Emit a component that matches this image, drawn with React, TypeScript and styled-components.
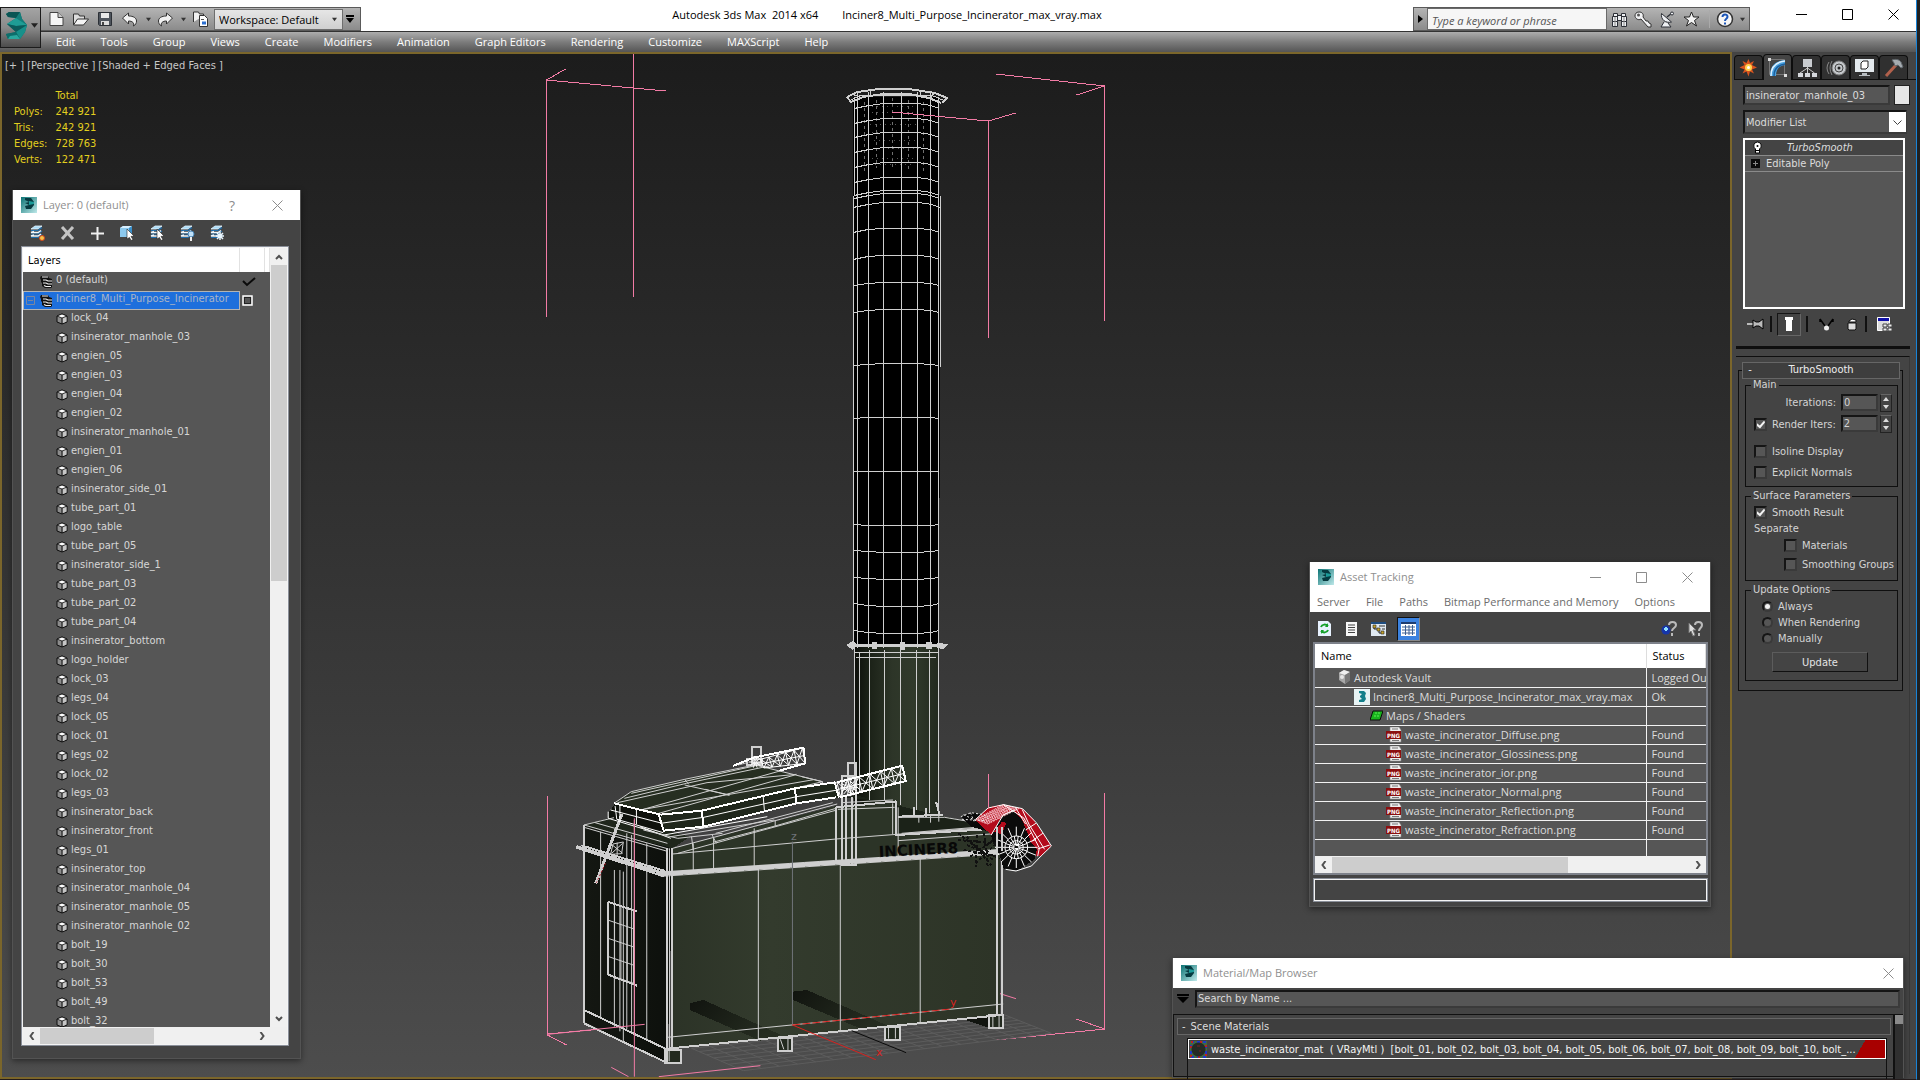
import React from "react";
import styled, { createGlobalStyle, css } from "styled-components";

const tahoma = `"DejaVu Sans Condensed", "DejaVu Sans", sans-serif`;
const segoe = `"Open Sans", "Noto Sans", sans-serif`;

const GlobalStyle = createGlobalStyle`
  * { box-sizing: border-box; }
  body { margin: 0; background: #202020; font-family: ${tahoma}; font-size: 11px; color: #dcdcdc; overflow: hidden; }
  button, input, select { font: inherit; color: inherit; margin: 0; padding: 0; border: 0; background: none; border-radius: 0; }
  svg { display: block; flex: none; }
`;

/* ---------- application frame ---------- */

const Frame = styled.div`
  position: relative;
  display: flex;
  flex-direction: column;
  height: 100vh;
  margin-right: 3px;
  border-right: 1px solid #1883d7;
  border-bottom: 1px solid #241c1c;
  overflow: hidden;
`;

const Header = styled.header`
  display: grid;
  grid-template: 31px 21px / 41px 1fr;
  background: linear-gradient(#fff 31px, #333 31px, #333 32px, #adadad 32px, #7c7c7c 42px, #555 52px);
`;

const AppButton = styled.button`
  grid-row: 1 / 3;
  display: flex;
  align-items: center;
  gap: 4px;
  height: 41px;
  margin-top: 7px;
  padding: 0 0 4px 5px;
  border: 1px solid #1c1c1c;
  background: linear-gradient(#a4a4a4, #8a8a8a 50%, #4c4c4c);
`;

const TitleBar = styled.div`
  display: flex;
  align-items: flex-end;
`;

const QuickBar = styled.div`
  display: flex;
  align-items: center;
  height: 24px;
  padding: 0 3px 0 7px;
  border: 1px solid #5a5a5a;
  border-left: 0;
  background: linear-gradient(#b4b4b4, #8b8b8b);
`;

const BarButton = styled.button<{ $w?: number }>`
  display: flex;
  align-items: center;
  justify-content: center;
  width: ${(p) => p.$w ?? 24}px;
  height: 22px;
`;

const WorkspaceSelect = styled.div`
  position: relative;
  display: flex;
  select {
    width: 129px;
    height: 21px;
    padding-left: 4px;
    appearance: none;
    border: 1px solid #6e6e6e;
    background: linear-gradient(#e6e6e6, #cfcfcf);
    color: #000;
    font: 11px ${segoe};
  }
  svg { position: absolute; right: 6px; top: 8px; pointer-events: none; }
`;

const AppTitle = styled.h1`
  flex: 1;
  display: flex;
  justify-content: center;
  gap: 24px;
  margin: 0;
  align-self: stretch;
  font: 11px/30px ${segoe};
  color: #000;
`;

const InfoCenter = styled.div`
  display: flex;
  align-items: center;
  height: 24px;
  width: 337px;
  border: 1px solid #5a5a5a;
  background: linear-gradient(#b4b4b4, #8b8b8b);
  input {
    width: 180px;
    height: 22px;
    padding: 2px 0 0 4px;
    border: 1px solid #6a6a6a;
    background: #f6f6f6;
    font: italic 11px ${segoe};
    color: #444;
    &::placeholder { color: #555; }
  }
`;

const InfoDivider = styled.span`
  width: 1px;
  height: 18px;
  margin: 0 2px 0 6px;
  background: #aaa;
`;

const WindowButtons = styled.div`
  display: flex;
  align-self: stretch;
  padding-left: 28px;
`;

const CaptionButton = styled.button<{ $dim?: boolean; $w?: number }>`
  display: flex;
  align-items: center;
  justify-content: center;
  width: ${(p) => p.$w ?? 46}px;
  height: 29px;
  color: ${(p) => (p.$dim ? "#8c8c8c" : "#000")};
  font: 14px ${segoe};
`;

const MenuBar = styled.nav`
  display: flex;
  gap: 25px;
  padding-left: 15px;
  button { font: 11px/20px ${segoe}; color: #fff; white-space: nowrap; }
`;

const Workspace = styled.main`
  flex: 1;
  display: flex;
  min-height: 0;
`;

/* ---------- viewport ---------- */

const Viewport = styled.section`
  position: relative;
  flex: 1;
  min-width: 0;
  overflow: hidden;
  border: 2px solid #7b662b;
  background: linear-gradient(#1c1c1c, #2a2a2a 30%, #3b3b3b 65%, #4d4d4d);
`;

const Scene = styled.svg`
  position: absolute;
  left: -2px;
  top: -2px;
  width: 1732px;
  height: 1027px;
`;

const ViewportLabels = styled.div`
  position: relative;
  display: flex;
  gap: 3px;
  padding: 4px 3px 0;
  button { line-height: 16px; color: #c8c8c8; white-space: nowrap; }
`;

const Stats = styled.table`
  position: relative;
  margin: 14px 0 0 12px;
  border-collapse: collapse;
  color: #e3cf1e;
  line-height: 16px;
  th, td { padding: 0 8px 0 0; font-weight: normal; text-align: left; white-space: nowrap; }
`;

/* ---------- command panel ---------- */

const Panel = styled.aside`
  width: 184px;
  padding: 2px 0 0 2px;
  background: #444;
`;

const Tabs = styled.div`
  display: flex;
  height: 26px;
  border-bottom: 1px solid #0d0d0d;
`;

const Tab = styled.button<{ $on?: boolean }>`
  display: flex;
  align-items: center;
  justify-content: center;
  width: 29px;
  height: ${(p) => (p.$on ? 26 : 24)}px;
  margin-top: ${(p) => (p.$on ? 0 : 1)}px;
  border: 1px solid #0d0d0d;
  border-bottom: 0;
  border-radius: 4px 4px 0 0;
  background: ${(p) => (p.$on ? "#444" : "#303030")};
`;

const sunken = css`
  border: 2px solid;
  border-color: #151515 #3a3a3a #3a3a3a #151515;
  background: #565656;
`;

const PanelBody = styled.div`
  padding: 5px 6px 0 9px;
`;

const NameRow = styled.div`
  display: flex;
  justify-content: space-between;
  input[type="text"] { ${sunken} width: 147px; height: 20px; padding-left: 1px; }
`;

const Swatch = styled.button`
  width: 16px;
  height: 20px;
  border: 1px solid #222;
  background: #e6e6e6;
`;

const ModifierSelect = styled.div`
  position: relative;
  margin: 5px 3px 0 0;
  select { ${sunken} width: 100%; height: 24px; appearance: none; padding-left: 1px; }
  svg { position: absolute; right: 1px; top: 2px; pointer-events: none; }
`;

const Stack = styled.ul`
  height: 171px;
  margin: 4px 5px 0 0;
  padding: 0;
  list-style: none;
  border: 2px solid #fff;
  background: #565656;
`;

const StackItem = styled.li<{ $active?: boolean }>`
  display: flex;
  align-items: center;
  gap: ${(p) => (p.$active ? 24 : 6)}px;
  height: 16px;
  padding-left: ${(p) => (p.$active ? 7 : 6)}px;
  border-bottom: 1px solid #8a8a8a;
  background: ${(p) => (p.$active ? "#444" : "#565656")};
  font-style: ${(p) => (p.$active ? "italic" : "normal")};
`;

const StackTools = styled.div`
  display: flex;
  align-items: center;
  gap: 5px;
  height: 24px;
  margin: 3px 0 1px 2px;
`;

const ToolDivider = styled.span`
  width: 2px;
  height: 16px;
  background: #111;
`;

const PressedTool = styled.button`
  display: flex;
  align-items: center;
  justify-content: center;
  width: 24px;
  height: 23px;
  border: 1px solid;
  border-color: #151515 #666 #666 #151515;
`;

const PlainTool = styled.button<{ $w?: number }>`
  display: flex;
  justify-content: center;
  width: ${(p) => (p.$w ? p.$w + "px" : "auto")};
`;

const RollupArea = styled.div`
  margin: 10px 6px 0 2px;
  border-top: 3px solid #0f0f0f;
`;

const Rollup = styled.div`
  margin-top: 7px;
  padding: 5px 6px 0 2px;
  border-top: 1px solid #0f0f0f;
  border-right: 1px solid #383838;
  height: 718px;
`;

const RollupHead = styled.button`
  position: relative;
  display: grid;
  grid-template-columns: 14px 1fr 14px;
  width: 158px;
  height: 17px;
  margin-left: 4px;
  border: 1px solid #666;
  background: #3e3e3e;
  line-height: 14px;
  color: #eee;
`;

const RollupBody = styled.div`
  margin-top: -9px;
  width: 165px;
  padding: 8px 4px 6px 6px;
  border: 1px solid #0f0f0f;
`;

const Group = styled.fieldset<{ $h: number }>`
  display: flex;
  flex-direction: column;
  height: ${(p) => p.$h}px;
  margin: 0 0 3px;
  padding: 0 5px 0 8px;
  border: 1px solid #0f0f0f;
  min-width: 0;
  legend { margin-left: -3px; padding: 0 2px; line-height: 12px; color: #d4d4d4; }
`;

const Field = styled.div<{ $h?: number; $indent?: number; $end?: boolean }>`
  display: flex;
  align-items: center;
  justify-content: ${(p) => (p.$end ? "flex-end" : "flex-start")};
  gap: 5px;
  height: ${(p) => p.$h ?? 17}px;
  padding-left: ${(p) => p.$indent ?? 0}px;
  white-space: nowrap;
  color: #d4d4d4;
`;

const CheckBox = styled.input.attrs({ type: "checkbox" })`
  ${sunken}
  appearance: none;
  position: relative;
  flex: none;
  width: 13px;
  height: 13px;
  &:checked::before {
    content: "";
    position: absolute;
    inset: 1px 0 0 1px;
    background: #f2f2f2;
    clip-path: polygon(0 35%, 35% 62%, 90% 0, 100% 25%, 38% 100%, 0 70%);
  }
`;

const Radio = styled.input.attrs({ type: "radio" })`
  ${sunken}
  appearance: none;
  position: relative;
  flex: none;
  width: 11px;
  height: 11px;
  border-radius: 50%;
  &:checked::before {
    content: "";
    position: absolute;
    inset: 1px;
    border-radius: 50%;
    background: #f2f2f2;
  }
`;

const Spinner = styled.span`
  display: flex;
  gap: 2px;
  input { ${sunken} width: 37px; height: 17px; padding-left: 1px; }
`;

const SpinButtons = styled.span`
  display: grid;
  grid-template-rows: 8px 8px;
  width: 12px;
  border: 1px solid #222;
  border-top-color: #666;
  button { display: flex; align-items: center; justify-content: center; }
`;

const UpdateButton = styled.button`
  width: 96px;
  height: 20px;
  margin: 3px 0 0 18px;
  border: 1px solid;
  border-color: #5c5c5c #111 #111 #5c5c5c;
  color: #e4e4e4;
`;

/* ---------- floating windows ---------- */

const FloatWindow = styled.section`
  position: absolute;
  border: 1px solid #535353;
  border-top: 0;
  background: #444;
  box-shadow: 0 2px 6px rgba(0, 0, 0, 0.45);
`;

const LayerWindow = styled(FloatWindow)`left: 12px; top: 190px; width: 289px;`;
const AssetWindow = styled(FloatWindow)`right: 205px; top: 562px; width: 402px;`;
const MaterialWindow = styled(FloatWindow)`right: 12px; top: 958px; width: 732px;`;

const Caption = styled.header`
  display: flex;
  align-items: center;
  height: 30px;
  padding-left: 8px;
  background: #fff;
  h2 { flex: 1; margin: 0 0 0 6px; font: 11px/30px ${segoe}; color: #8f8f8f; }
`;

const ToolRow = styled.div<{ $h: number }>`
  display: flex;
  align-items: center;
  height: ${(p) => p.$h}px;
`;

const LayerTools = styled(ToolRow)`
  gap: 10px;
  padding-left: 14px;
  button { display: flex; justify-content: center; width: 20px; }
`;

const TreeFrame = styled.div`
  display: grid;
  grid-template: 779px 17px / 1fr 17px;
  margin: 0 11px 12px 8px;
  border: 2px solid #f4f4f4;
  outline: 1px solid #8a8f99;
  outline-offset: -1px;
  background: #efefef;
`;

const TreeTable = styled.table`
  width: 100%;
  border-collapse: collapse;
  table-layout: fixed;
  thead th { height: 24px; padding: 0 0 0 5px; background: #fff; color: #000; font-weight: normal; text-align: left; border-right: 1px solid #e2e2e2; }
  tbody td { height: 19px; padding: 0; }
`;

const Clip = styled.div`
  overflow: hidden;
  background: #565656;
`;

const TreeCell = styled.div<{ $level: number; $selected?: boolean }>`
  display: flex;
  align-items: center;
  gap: 3px;
  height: 19px;
  padding: 0 0 1px ${(p) => (p.$selected ? 2 : p.$level * 16 + 1)}px;
  border: ${(p) => (p.$selected ? "1px solid #b4b4b4" : "0")};
  background: ${(p) => (p.$selected ? "#1e6fdc" : "transparent")};
  color: ${(p) => (p.$selected ? "#a9b4c6" : "#d6d6d6")};
  white-space: nowrap;
  span { line-height: 14px; padding-bottom: 3px; }
`;

const ScrollV = styled.div`
  display: flex;
  flex-direction: column;
  align-items: center;
  background: #f0f0f0;
`;
const ScrollH = styled.div`
  display: flex;
  align-items: center;
  height: 17px;
  background: #f0f0f0;
`;
const Arrow = styled.button`
  display: flex;
  align-items: center;
  justify-content: center;
  width: 17px;
  height: 17px;
`;
const ThumbV = styled.div`width: 16px; height: 316px; background: #cdcdcd; margin-bottom: auto;`;
const ThumbH = styled.div<{ $w: number }>`width: ${(p) => p.$w}px; height: 16px; background: #cdcdcd; margin-right: auto;`;

const AssetMenu = styled.nav`
  display: flex;
  gap: 16px;
  height: 20px;
  padding-left: 7px;
  background: #fff;
  button { font: 11px/20px ${segoe}; color: #6c6c6c; white-space: nowrap; }
`;

const AssetTools = styled(ToolRow)`
  gap: 11px;
  padding: 3px 6px 0 6px;
  button { display: flex; align-items: center; justify-content: center; width: 16px; }
`;

const Push = styled.span`flex: 1;`;

const ActiveTool = styled.span`
  border: 1px solid #111;
  border-right-color: #888;
  border-bottom-color: #888;
  button { width: 21px; height: 22px; background: #3b82e0; }
`;

const AssetFrame = styled.div`
  margin: 0 2px 0 3px;
  border: 2px solid #7d818a;
  background: #565656;
  overflow: hidden;
`;

const AssetTable = styled.table`
  width: 100%;
  border-collapse: collapse;
  table-layout: fixed;
  font: 11px ${segoe};
  white-space: nowrap;
  col:first-child { width: 331px; }
  th { height: 24px; padding: 0 0 2px 6px; background: #fff; color: #000; font-weight: normal; text-align: left; border-right: 1px solid #ddd; }
  td { height: 19px; padding: 0; border-bottom: 1px solid #f2f2f2; overflow: hidden; }
  td + td { padding-left: 5px; border-left: 1px solid #f2f2f2; }
  tbody tr:last-child td { height: 17px; border-bottom: 0; }
`;

const AssetCell = styled.div<{ $level: number }>`
  display: flex;
  align-items: center;
  gap: 3px;
  height: 18px;
  padding-left: ${(p) => 23 + p.$level * 16}px;
`;

const StatusBox = styled.div`
  height: 24px;
  margin: 3px 2px 4px 3px;
  border: 2px solid #f4f4f4;
  outline: 1px solid #8a8f99;
  outline-offset: -1px;
`;

const SearchRow = styled.div`
  display: flex;
  align-items: center;
  gap: 6px;
  height: 26px;
  padding: 0 3px 5px 4px;
  input { ${sunken} flex: 1; height: 18px; padding-left: 1px; &::placeholder { color: #dcdcdc; } }
`;

const MaterialBody = styled.div`
  display: grid;
  grid-template-columns: minmax(0, 1fr) 10px;
  height: 63px;
  border: 1px solid #111;
  border-width: 1px 0 1px 1px;
`;

const MaterialTitle = styled.button`
  display: flex;
  gap: 5px;
  width: 100%;
  height: 17px;
  padding-left: 4px;
  border: 1px solid #666;
  background: #3e3e3e;
  line-height: 15px;
`;

const MaterialList = styled.div`
  padding: 3px 2px 0 3px;
`;

const MaterialSlots = styled.div`
  height: 41px;
  margin: 3px 4px 0 10px;
  border: 1px solid #111;
  border-bottom: 0;
`;

const MaterialItem = styled.button`
  display: flex;
  align-items: center;
  width: 100%;
  height: 20px;
  gap: 4px;
  padding: 0 4px 0 1px;
  border: 1px solid #fff;
  background: linear-gradient(120deg, transparent calc(100% - 26px), #a80000 calc(100% - 26px));
  color: #f4f4f4;
  white-space: nowrap;
`;

const MaterialScroll = styled.div`
  border-left: 2px solid #111;
  background: #303030;
  &::before { content: ""; display: block; height: 9px; background: #8a8a8a; }
`;

/* ---------- icons ---------- */

const MaxMark = () => (
  <svg width="21" height="27" viewBox="0 0 21 27">
    <path d="M0 2l3-2h11l2 7 5 6-2 7-5 7H2l-2-5 10-2-9-8 9-6-8-1z" fill="#0e6b69" />
    <path d="M0 2l3-2h11l-4 6-8-1z" fill="#0a5554" />
    <path d="M14 0l2 7 5 6-11-7z" fill="#137f7b" />
    <path d="M10 6l11 7-11 1-9-2z" fill="#1f9d95" />
    <path d="M1 12l9 2 11-1-11 7z" fill="#0b5c5b" />
    <path d="M21 13l-2 7-5 7-4-7z" fill="#17908a" />
    <path d="M0 22l10-2 4 7H2z" fill="#0c6e6b" />
    <path d="M2 27l2-3 7-1 3 4z" fill="#2aa89f" />
  </svg>
);

const MiniLogo = () => (
  <svg width="16" height="16" viewBox="0 0 16 16">
    <defs>
      <linearGradient id="mini" x2="1" y2="1">
        <stop offset="0" stopColor="#0b7374" />
        <stop offset="1" stopColor="#bfe9ea" />
      </linearGradient>
    </defs>
    <rect width="16" height="16" fill="url(#mini)" />
    <path d="M4 1h6l3 4v3l-3 4H5l-1-3 4-1-4-2 4-1-4-2z" fill="#063a40" />
    <path d="M8 4l5 1v2L8 8z" fill="#1b9a98" />
  </svg>
);

const Down = ({ fill = "#333", s = 6 }: { fill?: string; s?: number }) => (
  <svg width={s} height={s} viewBox="0 0 6 6"><path d="M0 1h6L3 5z" fill={fill} /></svg>
);

const NewIcon = () => (
  <svg width="18" height="16" viewBox="0 0 18 16"><path d="M2 1.500h8l5 5v8H2z" fill="#f6f6f6" stroke="#444" /><path d="M10 1.500v5h5" fill="#ccc" stroke="#444" /></svg>
);
const OpenIcon = () => (
  <svg width="18" height="16" viewBox="0 0 18 16"><path d="M1.500 14V3h5l1 2h5v3" fill="#ddd" stroke="#333" /><path d="M1.500 14l4-6h11l-5 6z" fill="#f4f4f4" stroke="#333" /></svg>
);
const SaveIcon = () => (
  <svg width="16" height="16" viewBox="0 0 16 16"><path d="M1.500 1.500h13v13h-12l-1-1z" fill="#4e545c" stroke="#2c3036" /><path d="M4 2h8v5H4z" fill="#e8e8e8" /><path d="M4 10h8v4H4z" fill="#ddd" /><path d="M5 11h2v3H5z" fill="#444" /></svg>
);
const UndoIcon = ({ flip }: { flip?: boolean }) => (
  <svg width="17" height="15" viewBox="0 0 17 15"><path transform={flip ? "translate(17 0) scale(-1 1)" : undefined} d="M1.500 6l6-5v3c5 0 8 2 8 5 0 2-1 4-3 5 1-3-1-5-5-5v3z" fill="#f2f2f2" stroke="#333" /></svg>
);
const ProjectIcon = () => (
  <svg width="17" height="18" viewBox="0 0 17 18"><path d="M1.500 12V2h5l1 2h4v2" fill="#f0f0f0" stroke="#333" /><path d="M7.500 5.500h5l3 3v8h-8z" fill="#fff" stroke="#333" /><path d="M9 9.500h3" stroke="#555" /><path d="M10 13h4" stroke="#2b6fd0" strokeWidth="3" /></svg>
);
const Binoculars = () => (
  <svg width="17" height="17" viewBox="0 0 17 17" stroke="#2c2f36" fill="#eef0f3"><path d="M2.500 2.500h4v3h-4zM10.500 2.500h4v3h-4zM1.500 5.500h5v5h-5zM10.500 5.500h5v5h-5zM1.500 10.500h5v5h-5zM10.500 10.500h5v5h-5zM6.500 4.500h4v5h-4z" /><path d="M4 6v9M13 6v9" stroke="#888" /></svg>
);
const KeyIcon = () => (
  <svg width="18" height="17" viewBox="0 0 18 17"><path d="M7 8l7 8h3v-3l-2-1-1-2h-2L9 6c1-3-1-5-4-5S1 3 1 5s3 5 6 3z" fill="#f0f1f3" stroke="#333" /><circle cx="4.500" cy="4" r="1.500" fill="#555" /></svg>
);
const DishIcon = () => (
  <svg width="16" height="17" viewBox="0 0 16 17" stroke="#2c2f36" fill="#eef0f3"><path d="M5 11l-3 5h10l-3-4" /><path d="M2.500 2.500c-1 6 4 10 10 8.500z" /><path d="M8 6l5-4" strokeWidth="1.500" /><circle cx="13" cy="2.500" r="1.500" /></svg>
);
const StarIcon = () => (
  <svg width="17" height="16" viewBox="0 0 17 16"><path d="M8.500 1l2 5h5.500l-4.500 3.500 2 5.500-5-3.500-5 3.500 2-5.500L1 6h5.500z" fill="#f4f4f4" stroke="#222" /></svg>
);
const HelpIcon = () => (
  <svg width="18" height="18" viewBox="0 0 18 18"><circle cx="9" cy="9" r="7.500" fill="#f6f6f6" stroke="#333" strokeWidth="1.500" /><path d="M6.500 7c0-3.500 5-3.300 5-.3C11.500 8.800 9 8.600 9 11M9 12.500v2" fill="none" stroke="#1c56b8" strokeWidth="2" /></svg>
);

const CloseGlyph = () => (<svg width="11" height="11" viewBox="0 0 11 11"><path d="M.5.5l10 10M10.500.5l-10 10" stroke="currentColor" /></svg>);
const MaxGlyph = () => (<svg width="11" height="11" viewBox="0 0 11 11"><path d="M.5.5h10v10H.5z" fill="none" stroke="currentColor" /></svg>);
const MinGlyph = () => (<svg width="11" height="11" viewBox="0 0 11 11"><path d="M0 5.500h11" stroke="currentColor" /></svg>);

const chevrons: Record<string, string> = { up: "M1 6l3-3 3 3", down: "M1 2l3 3 3-3", left: "M5.500 0L2.500 4l3 4", right: "M2.500 0l3 4-3 4" };
const Chevron = ({ dir }: { dir: string }) => (
  <svg width="8" height="8" viewBox="0 0 8 8"><path d={chevrons[dir]} fill="none" stroke="#505050" strokeWidth="2" /></svg>
);

const StackSheets = ({ children }: { children?: React.ReactNode }) => (
  <svg width="16" height="16" viewBox="0 0 16 16">
    <path d="M6 1h7L9 4H2z" fill="#a9dbf7" stroke="#e6f5ff" strokeWidth=".8" />
    <path d="M2 5.500h7l4-3M2 9h7l4-3M2 12.500h7l4-3" fill="none" stroke="#1f6dab" strokeWidth="1.200" />
    <path d="M5 6.500L2 7.500h7l3-2M5 10l-3 1h7l3-2" fill="none" stroke="#f2f8fc" strokeWidth="1.400" />
    {children}
  </svg>
);
const Cursor = () => <path d="M8 4l7 7-3 .5 2 3-2 1-1.500-3L8 14z" fill="#fff" stroke="#222" strokeWidth=".6" />;

const LayerGlyph = () => (
  <svg width="13" height="13" viewBox="0 0 13 13">
    <path d="M1 1h7l1 2 3 1v8l-1 1H5L2 11V8L1 7V5L0 3z" fill="#111" />
    <path d="M2 2h6M3 5h3l2 1h4M3 8h3l2 1h4M4 10.500l2 1h5" stroke="#f2f2f2" strokeWidth="1.200" fill="none" />
  </svg>
);
const CubeGlyph = () => (
  <svg width="12" height="12" viewBox="0 0 12 12">
    <path d="M6 1l5 2v6l-5 2-5-2V3z" fill="#8c8c8c" stroke="#0c0c0c" />
    <path d="M6 1l5 2-5 2-5-2z" fill="#fff" stroke="#0c0c0c" strokeWidth=".8" />
    <path d="M6.500 5.500L10.500 4v4.500l-4 1.800z" fill="#c6c6c6" />
    <path d="M6 5v6" stroke="#0c0c0c" />
  </svg>
);

const PngGlyph = () => (
  <svg width="16" height="16" viewBox="0 0 16 16">
    <path d="M4 0h9l2 3v12H4z" fill="#eee" stroke="#888" strokeWidth=".6" />
    <path d="M6 2h6M6 13.500h7" stroke="#777" />
    <rect x="0" y="4" width="15" height="8" fill="#8b0f0f" />
    <text x="7.500" y="10.500" textAnchor="middle" fontFamily="DejaVu Sans Condensed" fontWeight="bold" fontSize="6" fill="#fff">PNG</text>
  </svg>
);
const VaultGlyph = () => (
  <svg width="13" height="14" viewBox="0 0 13 14"><path d="M1 3l5-3 6 2v8l-5 4-6-4z" fill="#a8a8a8" /><path d="M1 3l5-3 6 2-5 3z" fill="#efefef" /><path d="M7 5l5-3v8l-5 4z" fill="#777" /><circle cx="4" cy="7" r="2" fill="#e6e6e6" /></svg>
);
const MaxFileGlyph = () => (
  <svg width="16" height="16" viewBox="0 0 16 16"><rect width="16" height="16" fill="#e7f3f4" /><path d="M5 2h5l2 2-1 3 1 3-2 3H5v-2l3-1-2-2V7l2-2-3-1z" fill="#137f8a" /></svg>
);
const MapsGlyph = () => (
  <svg width="13" height="12" viewBox="0 0 13 12"><path d="M3 1h10l-3 9H0z" fill="#18b31c" stroke="#0a0a0a" /><path d="M5 3h5M4 6h5" stroke="#5ff05a" strokeDasharray="2 1" /></svg>
);

/* ---------- scene drawing ---------- */

type Pt = [number, number];
const mix = (a: Pt, b: Pt, t: number): Pt => [a[0] + (b[0] - a[0]) * t, a[1] + (b[1] - a[1]) * t];
const seg = (a: Pt, b: Pt) => `M${a[0].toFixed(1)} ${a[1].toFixed(1)}L${b[0].toFixed(1)} ${b[1].toFixed(1)}`;

/** Subdivides a quad (a-b top edge, d-c bottom edge) into a wire mesh path. */
function mesh(a: Pt, b: Pt, c: Pt, d: Pt, nu: number, nv: number, cross = false) {
  let out = "";
  for (let i = 0; i <= nu; i++) out += seg(mix(a, b, i / nu), mix(d, c, i / nu));
  for (let j = 0; j <= nv; j++) out += seg(mix(a, d, j / nv), mix(b, c, j / nv));
  if (cross)
    for (let i = 0; i < nu; i++) {
      const t0 = mix(a, b, i / nu), t1 = mix(a, b, (i + 1) / nu);
      const b0 = mix(d, c, i / nu), b1 = mix(d, c, (i + 1) / nu);
      out += seg(t0, b1) + seg(b0, t1);
    }
  return out;
}

const tubeX = [857.5, 868.5, 883.5, 901.5, 917.5, 930.5];
const tubeRings = [228, 255, 282, 309, 363, 417, 471, 525, 552, 579, 606, 633];

/** One edge loop of the pipe: flat in the middle, bending by d toward both rims. */
const ring = (row: number, x0: number, x1: number, d: number) => {
  const y = row + 0.5;
  const step = Math.round(d / 3);
  return `M${x0} ${y + d}L${x0 + 15} ${y + step}L${x0 + 30} ${y}H${x1 - 22}L${x1 - 8} ${y + step}L${x1} ${y + d}`;
};

const fan = (cx: number, cy: number, r0: number, r1: number, n: number) =>
  Array.from({ length: n }, (_, i) => {
    const a = (i / n) * Math.PI * 2;
    return seg([cx + Math.cos(a) * r0, cy + Math.sin(a) * r0], [cx + Math.cos(a) * r1, cy + Math.sin(a) * r1]);
  }).join("");

const Wire = styled.path<{ $c?: string; $w?: number }>`
  fill: none;
  stroke: ${(p) => p.$c ?? "#cfcfcf"};
  stroke-width: ${(p) => p.$w ?? 1};
  vector-effect: non-scaling-stroke;
`;

function Incinerator() {
  return (
    <Scene viewBox="0 52 1732 1027" shapeRendering="crispEdges" role="img" aria-label="Incinerator model">
      <defs>
        <linearGradient id="pipe">
          <stop offset="0" stopColor="#0c0e0a" /><stop offset=".16" stopColor="#1a2016" />
          <stop offset=".45" stopColor="#2d3528" /><stop offset=".7" stopColor="#313a2b" /><stop offset="1" stopColor="#22291e" />
        </linearGradient>
        <linearGradient id="front"><stop offset="0" stopColor="#2c3327" /><stop offset=".3" stopColor="#333b2d" /><stop offset="1" stopColor="#2d3427" /></linearGradient>
        <linearGradient id="side"><stop offset="0" stopColor="#141712" /><stop offset="1" stopColor="#0d100c" /></linearGradient>
        <linearGradient id="bar" x1="0" y1="0" x2="1" y2="0.400"><stop offset="0" stopColor="#11140f" /><stop offset="1" stopColor="#252c20" /></linearGradient>
      </defs>

      {/* selection brackets */}
      <Wire $c="#f27ba5" d="M546.500 317V80l19-11M546.500 80l119 11M633.500 54v243M1104.500 321V86L996 74M1104.500 86l-28 9M988.500 338V121l27-8" />
      <Wire $c="#f27ba5" d="M547.500 796v239l19 10M547.500 1034l98-9M1104.500 793v236l-28-10M1104.500 1029l-108 11M988.500 774v216" />

      {/* ground grid */}
      <g transform="translate(540 720) scale(.34439 .33333)">
        <Wire $c="#5c5c5c" d={mesh([440, 985], [1350, 885], [1485, 940], [590, 1052], 17, 7)} />
        <Wire $c="#f27ba5" d="M1162 823l140-13l80 26M207 1042l50 28M345 1070l295-33" />
      </g>

      {/* chimney */}
      <path d="M853 97h85v98h2v172l-1 277h-86z" fill="#000" />
      <path d="M854 645h85v170h-85z" fill="url(#pipe)" />
      <Wire $c="#6f6f6f" strokeDasharray="3 3" d="M864.500 102v70M876.500 100v68M892.500 98v72M908.500 100v70M923.500 102v70" />
      <Wire $c="#555" strokeDasharray="1 4" d="M872 106h45M872 112h50M870 124h50M872 132h48M874 140h45M868 148h52M872 158h50M870 164h45" />
      <Wire d={tubeX.map((x) => `M${x} 92V648`).join("") + "M854.500 97V196M938.500 97V196M853.500 196V648M938.500 196V648M940.500 196V367"} />
      <Wire d={[103, 118, 132, 147, 162, 177].map((y) => ring(y, 854, 939, 5)).join("")} />
      <Wire d={ring(190, 854, 939, 5) + ring(193, 854, 939, 5) + ring(202, 853, 940, 5)} />
      <Wire d={tubeRings.map((y) => ring(y, 853, 939, Math.round((450 - y) / 55))).join("")} />
      <Wire $c="#f27ba5" d="M892 112l96 9" />
      <Wire $w={2} d="M847 97l10-5 22-3h30l26 4 12 5-5 5M847 97l4 5 12-5 20-3h26l20 4 12 5" />
      <Wire d="M849 101l12-6h70l14 6M852 94l10 4M870 90v6M920 90v6M934 93l-4 6" />
      <Wire $w={3} d="M848 645.500h98" />
      <path d="M846 645l7-4 4 4-4 5zM872 642h5v7h-5zM900 642h5v8h-5zM926 642h6v7h-6zM937 643l11 1-5 5-6-1z" fill="#cfcfcf" />
      <Wire d="M854 652.500h85M856 657.500h80M854.500 648V790M859.500 652v140M869.500 650v150M884.500 650v150M900.500 650v155M916.500 650v160M929.500 650v163M938.500 648V812" />

      <g transform="translate(540 720) scale(.34439 .33333)">
        {/* body shells */}
        <path d="M128 315l87-25 150 70 20 25v80l-15 565-242-120z" fill="url(#side)" />
        <path d="M128 315l87-25 220 60-50 35z" fill="#1f261b" />
        <path d="M385 465l950-70v490l-950 100z" fill="url(#front)" />
        <path d="M385 385l475-127 177-15v97l300-20v76l-952 68z" fill="#2c3427" />
        <path d="M870 232l165 12v96l300-20-170-32-240-60z" fill="#1b2218" />
        <path d="M215 250l50-35 155-37 205-43 195 50-80 20-270 67-125 8z" fill="#262e21" />
        <path d="M345 285l125-13 270-67 115-18 15 45-125 18-270 70-115 18z" fill="#20271c" />
        <path d="M198 280l20-30 130 35 12 55-160-42z" fill="#0f120d" />

        {/* lower skids */}
        <path d="M435 850l40-10 225 105-60 17-205-92z" fill="url(#bar)" />
        <path d="M735 815l40-5 230 105-65 15-205-90z" fill="url(#bar)" />
        <path d="M1220 895l85-9v38z" fill="#11140f" />
        <path d="M363 990h45v38h-45zM690 955h43v38h-43zM1003 920h41v40h-41zM1305 886h38v38h-38z" fill="#232a1f" />

        {/* side wires */}
        <Wire d="M128 315v593M176 335v556M216 450v470M232 450v484M242 455v512M252 340v588M266 345v590M274 300v640M310 370v588M128 870l242 118M128 908l240 120M128 315l87-22M128 315l245 72M128 322l242 72M160 308l210 62" />
        <Wire $w={2} d="M128 315v593M128 870l240 118M128 910l240 118" />
        <Wire d={mesh([198, 546], [272, 572], [272, 790], [198, 764], 4, 4)} />
        <Wire $w={2} d="M198 546l84 28M198 764l84 33M274 572v222M198 546v218" />
        <Wire $w={3} d="M105 380l260 82" />
        <Wire $w={2} d="M120 376l240 76M105 383l255 86" />
        <Wire $w={3} d="M238 282L162 490" />
        <Wire $w={1} $c="#b01525" strokeDasharray="2 2" d="M190 430l-26 58" />
        <Wire d="M212 372l30-6-5 35-32 2zM210 375l30 25M240 370l-32 30M224 368v36" />

        {/* front wires */}
        <Wire $w={4} d="M350 462L1335 395" />
        <Wire d="M350 456L1340 388M350 469L1335 402" />
        <path d="M345 455l14-6 12 10-10 10zM535 447l8-7 8 7-8 10zM700 436l8-6 8 6-8 9zM860 425l8-6 8 6-8 9zM1060 410l8-6 8 6-8 9zM1190 402l8-6 8 6-8 9z" fill="#cfcfcf" />
        <Wire $w={2} d="M368 385v640M384 385v600" />
        <Wire d="M376 385v600" />
        <Wire $w={2} d="M1328 322v563M1341 322v563" />
        <Wire $w={2} d="M370 986L1340 885" />
        <Wire d="M370 952L1345 852M634 450v508M872 430v500M1104 412v495" />
        <Wire d="M445 370v90M504 352v105M622 325v125M385 402l475-45l480-38M400 400l462-130M385 385l120-33M505 352l178-50 180-50M505 366l178-48 180-54M510 340l340-92M1037 345l300-23M1040 362l295-22M440 350l5 40M500 345l12 25M683 300v20" />
        <Wire $w={2} d="M1035 243v105M860 262v160M860 262l175-18M1037 345l300-20" />
        <Wire d="M1024 250v92M1040 262v150M1050 340l240-20M875 248l150-8M865 268l165 -6" />
        <Wire $w={2} d="M1040 290l130-6M1150 245l10 40M1085 262v25M1120 265v25" />
        <Wire d="M1045 292l130 0 160 28M1100 286v22M1134 286v22M1158 280v25" />

        {/* lid */}
        <Wire d="M215 250l50-35 155-37 205-43M625 135l195 50M265 220l370-85M245 235l180-45 240-52M225 248l260-60 260-25M345 280L740 165M300 268L700 152M420 195l130 30M420 178l12 15M480 208l70 18M820 185l-80 20M760 170l60 15v10M290 270L800 178" />
        <Wire $w={2} $c="#fff" d="M215 250l135 34M350 284l120-12 270-67 116-18M860 232l-115 18-270 70-117 12M345 285l15 50M470 270l5 52M740 205l5 45M856 187l12 46" />
        <Wire $c="#fff" d="M350 310l125-18 270-62 120-20M648 228l4 48M218 258l5 40 135 40M232 255v40M280 268v45M205 270l150 40M198 275v20l162 50 300-55M290 320l90 35" />
        <Wire d="M380 350l300-50M300 330l100 25 130-15M575 135l30-8" />

        {/* hinge posts */}
        <Wire $w={2} d="M617 80h24v50h-24zM893 130h25v45h-25zM600 116h46v20h-46z" />
        <Wire $w={2} d="M877 168h40v268h-40zM888 230v205M906 230v205" />
        <Wire $c="#fff" $w={2} d="M560 138l60-25 145-30 5 47-75 22M870 232l192-49-10-46-190 50" />
        <Wire $c="#fff" d={mesh([640, 118], [762, 84], [770, 130], [650, 144], 5, 2, true)} />
        <Wire $c="#fff" d={mesh([862, 186], [1052, 138], [1061, 183], [872, 230], 6, 2, true)} />
        <Wire $c="#fff" d={fan(898, 202, 3, 26, 14) + fan(625, 126, 2, 18, 10)} />

        {/* feet */}
        <Wire $w={2} d="M363 990h45v38h-45zM690 955h43v38h-43zM1003 920h41v40h-41zM1305 886h38v38h-38z" />
        <Wire d="M375 992v32M698 958l10 30M720 956v35M1012 922v34M1032 922v34M1315 888v34M1333 888v34" />

        {/* blower */}
        <path d="M1222 290l30-12 35 6 14 20v30l-50-14z" fill="#0a0a0a" />
        <path d="M1265 300l35-38 45-9 55 12 40 45 45 68-30 32-20-5-60-60-60 5z" fill="#b30b1c" />
        <path d="M1310 350l30-60 35-18 35 40 35 65-8 40-50 35-40-5-12-40z" fill="#0b0b0b" />
        <path d="M1400 300l28-10 50 88-22 28-30-40z" fill="#b30b1c" />
        <path d="M1318 335l24-30 12 4-14 34z" fill="#b30b1c" />
        <Wire $c="#f3b6bd" strokeDasharray="2 1" d={mesh([1265, 298], [1345, 254], [1390, 266], [1300, 312], 14, 8)} />
        <Wire $c="#fff" d="M1265 298l36-34 45-10 55 12 40 42 44 70-30 30-28 30-45 15-30-5M1345 254l60 40 45 90-5 25M1400 268l20 45 45 75M1380 262l30 50M1440 310l-30 20M1460 340l-30 22M1480 375l-35 12M1310 345l35-60 35-15" />
        <Wire $c="#fff" d={fan(1383, 382, 6, 34, 18) + fan(1383, 382, 34, 62, 16)} />
        <Wire $c="#fff" d="M1383 348a33 34 0 1 0 .1 0M1383 362a20 20 0 1 0 .1 0" />
        <path d="M1385 380l-8-8h14zM1378 384h12l-5 8z" fill="#fff" />
        <Wire $c="#111" $w={2} strokeDasharray="3 2" d="M1215 340l100 80M1240 350l70 85M1230 390l100 20M1265 430l60-60M1250 410l80-60M1290 340l10 100M1270 345l-5 95M1215 360l110 10M1240 375l95 40" />
        <Wire $c="#e8e8e8" strokeDasharray="2 2" d="M1222 290l30-12 35 6 15 12M1225 298l70 4M1230 284l40 20M1250 278l10 26" />
        <Wire $w={2} d="M1328 322v110M1341 322v70" />

        {/* pivot axes */}
        <Wire $c="#f27ba5" d="M274 295v775M22 943l282-30" />
        <Wire $c="#70747a" d="M733 365v548" />
        <Wire $c="#d8221f" d="M733 915l242 104" />
        <Wire $c="#d8221f" strokeDasharray="8 2" d="M733 915l460-48" />
        <Wire $c="#0a0a0a" d="M905 932l158 66" />
      </g>

      <g fontFamily="DejaVu Sans" shapeRendering="auto">
        <text x="879" y="857" transform="rotate(-3 879 857)" fontSize="15" fontWeight="bold" fill="#080808">INCINER8</text>
        <text x="791" y="840" fontSize="11" fill="#70747a">z</text>
        <text x="950" y="1006" fontSize="11" fill="#d8221f">y</text>
        <text x="876" y="1056" fontSize="11" fill="#d8221f">x</text>
      </g>
    </Scene>
  );
}

/* ---------- data ---------- */

const menus = ["Edit", "Tools", "Group", "Views", "Create", "Modifiers", "Animation", "Graph Editors", "Rendering", "Customize", "MAXScript", "Help"];
const stats = [["Polys:", "242 921"], ["Tris:", "242 921"], ["Edges:", "728 763"], ["Verts:", "122 471"]];
const objects = (
  "lock_04 insinerator_manhole_03 engien_05 engien_03 engien_04 engien_02 insinerator_manhole_01 engien_01 engien_06 " +
  "insinerator_side_01 tube_part_01 logo_table tube_part_05 insinerator_side_1 tube_part_03 tube_part_02 tube_part_04 " +
  "insinerator_bottom logo_holder lock_03 legs_04 lock_05 lock_01 legs_02 lock_02 legs_03 insinerator_back " +
  "insinerator_front legs_01 insinerator_top insinerator_manhole_04 insinerator_manhole_05 insinerator_manhole_02 " +
  "bolt_19 bolt_30 bolt_53 bolt_49 bolt_32"
).split(" ");
const maps = ["Diffuse", "Glossiness", "ior", "Normal", "Reflection", "Refraction"];

/* ---------- sections ---------- */

function AppHeader() {
  return (
    <Header>
      <AppButton aria-label="Application menu"><MaxMark /><Down s={7} fill="#222" /></AppButton>
      <TitleBar>
        <QuickBar>
          <BarButton $w={17} aria-label="New"><NewIcon /></BarButton>
          <BarButton $w={31} aria-label="Open"><OpenIcon /></BarButton>
          <BarButton $w={18} aria-label="Save"><SaveIcon /></BarButton>
          <BarButton $w={31} aria-label="Undo"><UndoIcon /></BarButton>
          <BarButton $w={6} aria-label="Undo history"><Down s={5} /></BarButton>
          <BarButton $w={29} aria-label="Redo"><UndoIcon flip /></BarButton>
          <BarButton $w={7} aria-label="Redo history"><Down s={5} /></BarButton>
          <BarButton $w={27} aria-label="Project folder"><ProjectIcon /></BarButton>
          <WorkspaceSelect>
            <select aria-label="Workspace"><option>Workspace: Default</option></select>
            <Down s={5} />
          </WorkspaceSelect>
          <BarButton $w={14} aria-label="Customize toolbar">
            <svg width="8" height="8" viewBox="0 0 8 8"><path d="M0 0h8v2H0zM0 3h8L4 8z" fill="#000" /></svg>
          </BarButton>
        </QuickBar>
        <AppTitle><span>Autodesk 3ds Max&nbsp; 2014 x64</span><span>Inciner8_Multi_Purpose_Incinerator_max_vray.max</span></AppTitle>
        <InfoCenter>
          <BarButton $w={13} aria-label="Collapse search"><svg width="5" height="8" viewBox="0 0 5 8"><path d="M0 0l5 4-5 4z" fill="#000" /></svg></BarButton>
          <input type="text" aria-label="Search help" placeholder="Type a keyword or phrase" />
          <BarButton aria-label="Search"><Binoculars /></BarButton>
          <BarButton aria-label="Subscription"><KeyIcon /></BarButton>
          <BarButton aria-label="Exchange"><DishIcon /></BarButton>
          <BarButton aria-label="Favorites"><StarIcon /></BarButton>
          <InfoDivider />
          <BarButton $w={26} aria-label="Help"><HelpIcon /></BarButton>
          <BarButton $w={8} aria-label="Help menu"><Down s={5} /></BarButton>
        </InfoCenter>
        <WindowButtons>
          <CaptionButton aria-label="Minimize"><MinGlyph /></CaptionButton>
          <CaptionButton aria-label="Maximize"><MaxGlyph /></CaptionButton>
          <CaptionButton aria-label="Close"><CloseGlyph /></CaptionButton>
        </WindowButtons>
      </TitleBar>
      <MenuBar>{menus.map((m) => <button key={m}>{m}</button>)}</MenuBar>
    </Header>
  );
}

function TabIcons() {
  return (
    <Tabs role="tablist">
      <Tab role="tab" aria-label="Create">
        <svg width="19" height="19" viewBox="0 0 19 19"><path d="M9.500 1l1.500 4 4-2-2 4 5 2.500-5 2 2 4-4-2-1.500 5-2-5-4 2 2-4-5-2 5-2.500-2-4 4 2z" fill="#d9541e" /><circle cx="9.500" cy="9.500" r="3.500" fill="#ffd34d" /><circle cx="9.500" cy="9.500" r="1.500" fill="#fff" /></svg>
      </Tab>
      <Tab $on role="tab" aria-label="Modify" aria-selected>
        <svg width="21" height="21" viewBox="0 0 21 21"><path d="M2.500 2.500h15v15h-15z" fill="none" stroke="#777" /><path d="M3 19C3 9 8 4 18 3v5c-6 1-9 4-9 11z" fill="#4ba3e0" /><path d="M4 19C4 10 9 5 18 4" fill="none" stroke="#dff1ff" strokeWidth="1.500" /><path d="M7 19c0-7 4-11 11-12" fill="none" stroke="#1b5f9e" strokeWidth="1.500" /><path d="M1 1h3v3H1zM17 17h3v3h-3z" fill="#ddd" /></svg>
      </Tab>
      <Tab role="tab" aria-label="Hierarchy">
        <svg width="20" height="20" viewBox="0 0 20 20"><path d="M6 1h9v8H6z" fill="#c9ccd0" /><path d="M10.500 9v6M10.500 10L3 15M10.500 10l7 5" stroke="#ccc" /><path d="M1 15h5v4H1zM8 15h5v4H8zM15 15h5v4h-5z" fill="#d5d8dc" /></svg>
      </Tab>
      <Tab role="tab" aria-label="Motion">
        <svg width="22" height="20" viewBox="0 0 22 20" fill="none"><path d="M4 4q-4 6 0 12M7 3q-4 7 0 14" stroke="#888" /><circle cx="14" cy="10" r="7" fill="#c4c7ca" stroke="#777" /><circle cx="14" cy="10" r="4" stroke="#444" /><circle cx="14" cy="10" r="1.500" fill="#222" /></svg>
      </Tab>
      <Tab role="tab" aria-label="Display">
        <svg width="21" height="19" viewBox="0 0 21 19"><path d="M1 1h19v13H1z" fill="#e4eaee" /><path d="M7 5l2-2h5v6l-2 2H7z" fill="#fff" stroke="#222" /><path d="M8 15h5v2h3v1H5v-1h3z" fill="#b7bcc0" /></svg>
      </Tab>
      <Tab role="tab" aria-label="Utilities">
        <svg width="20" height="20" viewBox="0 0 20 20"><path d="M12 7L2 18" stroke="#b2614c" strokeWidth="3" /><path d="M8 2c3-1 7-1 9 2l2 5-2 1-3-3-3 1-1-3z" fill="#a5abb0" stroke="#61676c" /></svg>
      </Tab>
    </Tabs>
  );
}

const NumberField = ({ id, label, value }: { id: string; label: string; value: string }) => (
  <>
    <label htmlFor={id}>{label}</label>
    <Spinner>
      <input id={id} type="text" defaultValue={value} />
      <SpinButtons>
        <button aria-label="Increase"><svg width="6" height="4" viewBox="0 0 6 4"><path d="M0 4l3-4 3 4z" fill="#ddd" /></svg></button>
        <button aria-label="Decrease"><svg width="6" height="4" viewBox="0 0 6 4"><path d="M0 0h6L3 4z" fill="#ddd" /></svg></button>
      </SpinButtons>
    </Spinner>
  </>
);

const Check = ({ id, label, on, indent, h }: { id: string; label: string; on?: boolean; indent?: number; h?: number }) => (
  <Field $indent={indent} $h={h}><CheckBox id={id} defaultChecked={on} /><label htmlFor={id}>{label}</label></Field>
);

function CommandPanel() {
  return (
    <Panel>
      <TabIcons />
      <PanelBody>
        <NameRow><input type="text" aria-label="Object name" defaultValue="insinerator_manhole_03" /><Swatch aria-label="Object color" /></NameRow>
        <ModifierSelect>
          <select aria-label="Modifier List"><option>Modifier List</option></select>
          <svg width="17" height="20" viewBox="0 0 17 20"><rect width="17" height="20" fill="#fff" /><path d="M4.500 8.500l4 4 4-4" fill="none" stroke="#444" /></svg>
        </ModifierSelect>
        <Stack>
          <StackItem $active>
            <svg width="11" height="13" viewBox="0 0 11 13"><path d="M5.500 1a3.800 3.800 0 0 1 2 7v4h-4V8a3.800 3.800 0 0 1 2-7z" fill="#fff" stroke="#000" /><path d="M4 9.500h3" stroke="#000" /><circle cx="5.500" cy="5" r="1" fill="#000" /></svg>
            <span>TurboSmooth</span>
          </StackItem>
          <StackItem>
            <svg width="9" height="9" viewBox="0 0 9 9"><rect width="9" height="9" fill="#0a0a0a" /><path d="M2 4.500h5M4.500 2v5" stroke="#888" /></svg>
            <span>Editable Poly</span>
          </StackItem>
        </Stack>
        <StackTools>
          <PlainTool $w={20} aria-label="Pin stack"><svg width="17" height="12" viewBox="0 0 17 12"><path d="M0 6h7" stroke="#bbb" strokeWidth="2" /><path d="M6 2l3 2h3l4-3v10l-4-3H9l-3 2z" fill="#bbb" stroke="#000" /></svg></PlainTool>
          <ToolDivider />
          <PressedTool aria-label="Show end result"><svg width="8" height="14" viewBox="0 0 8 14"><path d="M0 0h8v3H7v11H1V3H0z" fill="#fff" /></svg></PressedTool>
          <ToolDivider />
          <PlainTool $w={26} aria-label="Make unique"><svg width="15" height="13" viewBox="0 0 15 13"><path d="M1 1l5 7M14 1L9 8M1 1v3M14 1v3" stroke="#000" strokeWidth="1.500" fill="none" /><circle cx="7.500" cy="10" r="2.500" fill="#eee" /></svg></PlainTool>
          <PlainTool $w={16} aria-label="Remove modifier"><svg width="10" height="13" viewBox="0 0 10 13"><path d="M1 5h8v6l-1 1H2l-1-1z" fill="#ddd" stroke="#111" /><path d="M2 3l3-2 4 1v2H2z" fill="#fff" stroke="#111" /></svg></PlainTool>
          <ToolDivider />
          <PlainTool $w={26} aria-label="Configure modifier sets"><svg width="16" height="15" viewBox="0 0 16 15"><path d="M.5.5h12v13H.5z" fill="#ddd" stroke="#fff" /><path d="M1 1h11v3H1z" fill="#1111a8" /><path d="M6 7h4v3H6zM11 7h4v3h-4zM6 11h4v3H6zM11 11h4v3h-4z" fill="#eee" stroke="#444" /></svg></PlainTool>
        </StackTools>
      </PanelBody>
      <RollupArea>
        <Rollup>
          <RollupHead><span>-</span><span>TurboSmooth</span></RollupHead>
          <RollupBody>
            <Group $h={108}>
              <legend>Main</legend>
              <Field $end $h={23}><NumberField id="iter" label="Iterations:" value="0" /></Field>
              <Field $h={20}>
                <CheckBox id="riOn" defaultChecked aria-label="Render Iters enabled" />
                <NumberField id="ri" label="Render Iters:" value="2" />
              </Field>
              <Check id="iso" label="Isoline Display" h={34} />
              <Check id="exp" label="Explicit Normals" h={9} />
            </Group>
            <Group $h={91}>
              <legend>Surface Parameters</legend>
              <Check id="smooth" label="Smooth Result" on h={20} />
              <Field $h={13}>Separate</Field>
              <Check id="mat" label="Materials" indent={30} h={21} />
              <Check id="sg" label="Smoothing Groups" indent={30} h={16} />
            </Group>
            <Group $h={97}>
              <legend>Update Options</legend>
              <Field $indent={8} $h={20}><Radio id="al" name="upd" defaultChecked /><label htmlFor="al">Always</label></Field>
              <Field $indent={8} $h={12}><Radio id="wr" name="upd" /><label htmlFor="wr">When Rendering</label></Field>
              <Field $indent={8} $h={21}><Radio id="mn" name="upd" /><label htmlFor="mn">Manually</label></Field>
              <UpdateButton>Update</UpdateButton>
            </Group>
          </RollupBody>
        </Rollup>
      </RollupArea>
    </Panel>
  );
}

function LayerManager() {
  return (
    <LayerWindow>
      <Caption><MiniLogo /><h2>Layer: 0 (default)</h2><CaptionButton $dim $w={44} aria-label="Help">?</CaptionButton><CaptionButton $dim aria-label="Close"><CloseGlyph /></CaptionButton></Caption>
      <LayerTools $h={26}>
        <button aria-label="Create layer"><StackSheets><circle cx="13" cy="13" r="2.500" fill="#f6c34a" stroke="#d2451b" /></StackSheets></button>
        <button aria-label="Delete layer"><svg width="15" height="14" viewBox="0 0 15 14"><path d="M2 1l11 12M13 1L2 13" stroke="#c4c4c4" strokeWidth="3" /></svg></button>
        <button aria-label="Add objects"><svg width="13" height="13" viewBox="0 0 13 13"><path d="M6.500 0v13M0 6.500h13" stroke="#f0f0f0" strokeWidth="2" /></svg></button>
        <button aria-label="Select objects"><svg width="16" height="16" viewBox="0 0 16 16"><path d="M1 3l3-2h9v8l-3 3H1z" fill="#8cc9ee" /><path d="M1 3l3-2h9l-3 2z" fill="#d7efff" /><path d="M10 3l3-2v8l-3 3z" fill="#3b8fc9" /><Cursor /></svg></button>
        <button aria-label="Select layer"><StackSheets><Cursor /></StackSheets></button>
        <button aria-label="Highlight layer"><StackSheets><circle cx="12" cy="9" r="3" fill="#bfe0f8" stroke="#4a86b8" /><path d="M12 12v4" stroke="#eee" strokeWidth="2" /></StackSheets></button>
        <button aria-label="Freeze layer"><StackSheets><path d="M11 7v8M7 11h8M8 8l6 6M14 8l-6 6" stroke="#e8f6ff" strokeWidth="1.500" /></StackSheets></button>
      </LayerTools>
      <TreeFrame>
        <Clip>
          <TreeTable>
            <colgroup><col /><col width="25" /><col width="5" /></colgroup>
            <thead><tr><th>Layers</th><th /><th /></tr></thead>
            <tbody>
              <tr><td><TreeCell $level={1}><LayerGlyph /><span>0 (default)</span></TreeCell></td>
                <td><svg width="17" height="12" viewBox="0 0 17 12"><path d="M3 5l4 4 8-7" fill="none" stroke="#0a0a0a" strokeWidth="2" /></svg></td><td /></tr>
              <tr><td>
                <TreeCell $level={0} $selected>
                  <svg width="11" height="9" viewBox="0 0 11 9"><path d="M.5.5h8v8h-8zM2 4.500h5" fill="none" stroke="#7a86a0" /></svg>
                  <LayerGlyph /><span>Inciner8_Multi_Purpose_Incinerator</span>
                </TreeCell></td>
                <td><svg width="14" height="12" viewBox="0 0 14 12"><rect x="3" y="1" width="9" height="9" fill="none" stroke="#fff" strokeWidth="1.500" /><rect x="4.500" y="2.500" width="6" height="6" fill="none" stroke="#222" /></svg></td><td /></tr>
              {objects.map((o) => <tr key={o}><td><TreeCell $level={2}><CubeGlyph /><span>{o}</span></TreeCell></td><td /><td /></tr>)}
            </tbody>
          </TreeTable>
        </Clip>
        <ScrollV><Arrow aria-label="Scroll up"><Chevron dir="up" /></Arrow><ThumbV /><Arrow aria-label="Scroll down"><Chevron dir="down" /></Arrow></ScrollV>
        <ScrollH><Arrow aria-label="Scroll left"><Chevron dir="left" /></Arrow><ThumbH $w={114} /><Arrow aria-label="Scroll right"><Chevron dir="right" /></Arrow></ScrollH>
      </TreeFrame>
    </LayerWindow>
  );
}

function AssetTracking() {
  return (
    <AssetWindow>
      <Caption><MiniLogo /><h2>Asset Tracking</h2>
        <CaptionButton $dim aria-label="Minimize"><MinGlyph /></CaptionButton><CaptionButton $dim aria-label="Maximize"><MaxGlyph /></CaptionButton><CaptionButton $dim aria-label="Close"><CloseGlyph /></CaptionButton>
      </Caption>
      <AssetMenu>{["Server", "File", "Paths", "Bitmap Performance and Memory", "Options"].map((m) => <button key={m}>{m}</button>)}</AssetMenu>
      <AssetTools $h={30}>
        <button aria-label="Refresh"><svg width="13" height="15" viewBox="0 0 13 15"><path d="M0 0h10l3 3v12H0z" fill="#e8f2ff" /><path d="M3 6c1-3 5-3 7-1M10 9c-1 3-5 3-7 1" stroke="#14a02a" strokeWidth="2" fill="none" /><path d="M10 2v4H7zM3 13V9h3z" fill="#14a02a" /></svg></button>
        <button aria-label="Status log"><svg width="11" height="14" viewBox="0 0 11 14"><rect width="11" height="14" fill="#f8f8f8" /><path d="M2 3h7M2 5.500h7M2 8h7M2 10.500h7" stroke="#444" /></svg></button>
        <button aria-label="Tree view"><svg width="15" height="14" viewBox="0 0 15 14"><rect width="15" height="14" fill="#dfe8f0" /><path d="M0 0h15v2H0z" fill="#1f4d80" /><path d="M3 5v2h4M8 7v4h3" stroke="#222" fill="none" /><path d="M2 3h3v3H2zM6 6h3v3H6zM10 9h3v3h-3z" fill="#c8a52c" stroke="#222" strokeWidth=".6" /><path d="M8 4h6M11 7h3" stroke="#333" /></svg></button>
        <ActiveTool><button aria-label="Table view"><svg width="15" height="14" viewBox="0 0 15 14"><rect width="15" height="14" fill="#fff" /><path d="M0 0h15v2H0z" fill="#1f3d70" /><path d="M1 5h13M1 8h13M1 11h13M4.500 3v10M8 3v10M11.500 3v10" stroke="#3c5f92" /></svg></button></ActiveTool>
        <Push />
        <button aria-label="Vault help"><svg width="16" height="16" viewBox="0 0 16 16"><circle cx="5" cy="9" r="4.500" fill="#1635a8" /><path d="M3 8h4M5 6v4" stroke="#8fe0ff" strokeWidth="2" /><path d="M8 4c0-4 7-4 7 0 0 3-4 3-4 6M11 12v3" stroke="#bbb" strokeWidth="2" fill="none" /></svg></button>
        <button aria-label="Context help"><svg width="16" height="16" viewBox="0 0 16 16"><path d="M1 2l7 7H5l2 5-2 1-2-5-2 2z" fill="#ddd" stroke="#777" /><path d="M7 4c0-4 7-4 7 0 0 3-3 3-3 6M11 12v3" stroke="#bbb" strokeWidth="2" fill="none" /></svg></button>
      </AssetTools>
      <AssetFrame>
        <AssetTable>
          <colgroup><col /><col /></colgroup>
          <thead><tr><th>Name</th><th>Status</th></tr></thead>
          <tbody>
            <tr><td><AssetCell $level={0}><VaultGlyph />Autodesk Vault</AssetCell></td><td>Logged Ou</td></tr>
            <tr><td><AssetCell $level={1}><MaxFileGlyph />Inciner8_Multi_Purpose_Incinerator_max_vray.max</AssetCell></td><td>Ok</td></tr>
            <tr><td><AssetCell $level={2}><MapsGlyph />Maps / Shaders</AssetCell></td><td /></tr>
            {maps.map((m) => <tr key={m}><td><AssetCell $level={3}><PngGlyph />{`waste_incinerator_${m}.png`}</AssetCell></td><td>Found</td></tr>)}
            <tr><td /><td /></tr>
          </tbody>
        </AssetTable>
        <ScrollH><Arrow aria-label="Scroll left"><Chevron dir="left" /></Arrow><ThumbH $w={236} /><Arrow aria-label="Scroll right"><Chevron dir="right" /></Arrow></ScrollH>
      </AssetFrame>
      <StatusBox />
    </AssetWindow>
  );
}

function MaterialBrowser() {
  return (
    <MaterialWindow>
      <Caption><MiniLogo /><h2>Material/Map Browser</h2><CaptionButton $dim $w={30} aria-label="Close"><CloseGlyph /></CaptionButton></Caption>
      <SearchRow>
        <PlainTool aria-label="Browser options"><svg width="12" height="9" viewBox="0 0 12 9"><path d="M0 0h12v2H0zM0 3h12L6 9z" fill="#000" /></svg></PlainTool>
        <input type="text" aria-label="Search by Name" placeholder="Search by Name ..." />
      </SearchRow>
      <MaterialBody>
        <MaterialList>
          <MaterialTitle><span>-</span><span>Scene Materials</span></MaterialTitle>
          <MaterialSlots>
            <MaterialItem>
              <svg width="17" height="17" viewBox="0 0 17 17"><rect width="17" height="17" fill="#3f6a44" /><rect x="1" y="1" width="15" height="15" fill="none" stroke="#2038c8" strokeWidth="2" strokeDasharray="3 3" /><rect x="1" y="1" width="15" height="15" fill="none" stroke="#c02020" strokeWidth="2" strokeDasharray="2 7" /><circle cx="8.500" cy="8.500" r="7" fill="#262b26" /><path d="M7 5h3M9 10h2" stroke="#7a2222" /></svg>
              <span>waste_incinerator_mat &nbsp;( VRayMtl ) &nbsp;[bolt_01, bolt_02, bolt_03, bolt_04, bolt_05, bolt_06, bolt_07, bolt_08, bolt_09, bolt_10, bolt_...</span>
            </MaterialItem>
          </MaterialSlots>
        </MaterialList>
        <MaterialScroll />
      </MaterialBody>
    </MaterialWindow>
  );
}

export default function App() {
  return (
    <>
      <GlobalStyle />
      <Frame>
        <AppHeader />
        <Workspace>
          <Viewport>
            <Incinerator />
            <ViewportLabels><button>[+ ]</button><button>[Perspective ]</button><button>[Shaded + Edged Faces ]</button></ViewportLabels>
            <Stats>
              <thead><tr><th /><th>Total</th></tr></thead>
              <tbody>{stats.map(([k, v]) => <tr key={k}><th>{k}</th><td>{v}</td></tr>)}</tbody>
            </Stats>
          </Viewport>
          <CommandPanel />
        </Workspace>
        <LayerManager />
        <AssetTracking />
        <MaterialBrowser />
      </Frame>
    </>
  );
}
